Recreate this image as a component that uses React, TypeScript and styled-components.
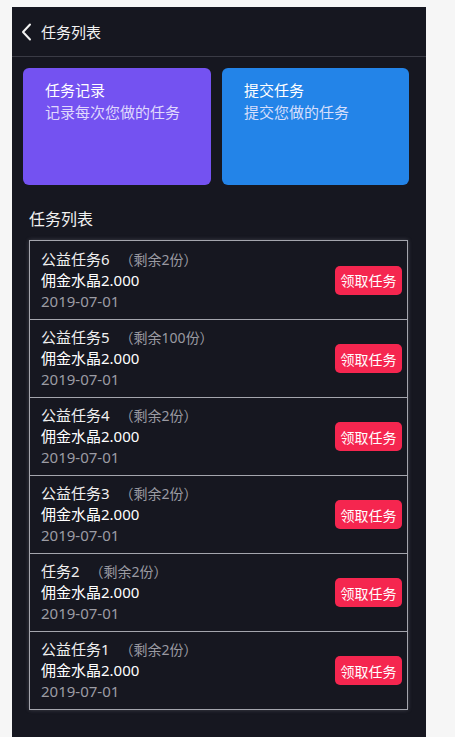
import React from "react";
import styled, { createGlobalStyle } from "styled-components";

const Global = createGlobalStyle`
  html, body { margin: 0; padding: 0; background: #f6f6f6; }
  body {
    font-family: "Noto Sans", "Noto Sans CJK SC", sans-serif;
    -webkit-font-smoothing: antialiased;
  }
  #root { padding: 7px 0 0 12px; }
`;

const Panel = styled.div`
  width: 414px;
  min-height: 760px;
  background: #161720;
  color: #fff;
`;

const Header = styled.div`
  height: 50px;
  border-bottom: 1px solid #3a3b45;
  display: flex;
  align-items: center;
  padding-left: 9px;
  gap: 8px;
  box-sizing: border-box;
`;

const HeaderTitle = styled.div`
  font-size: 15px;
  color: #f2f2f2;
`;

const Cards = styled.div`
  display: grid;
  grid-template-columns: 188px 187px;
  gap: 11px;
  padding: 11px 0 0 11px;
`;

const Card = styled.div<{ $bg: string }>`
  height: 117px;
  border-radius: 6px;
  background: ${(p) => p.$bg};
  padding: 11px 0 0 22px;
  box-sizing: border-box;
  line-height: 22px;
  font-size: 15px;
`;

const CardTitle = styled.div`
  color: #fff;
`;

const CardSub = styled.div`
  color: rgba(240, 236, 255, 0.88);
`;

const Section = styled.div`
  padding: 23px 18px 30px 17px;
`;

const SectionTitle = styled.div`
  font-size: 16px;
  line-height: 22px;
  color: #f2f2f2;
  margin-bottom: 10px;
`;

const List = styled.div`
  border: 1px solid #a4a5ad;
  box-shadow: 0 0 4px rgba(200, 200, 210, 0.25);
`;

const Row = styled.div`
  display: flex;
  align-items: center;
  justify-content: space-between;
  padding: 7px 5px 7px 11px;
  border-top: 1px solid #a4a5ad;
  &:first-child { border-top: none; }
  height: 78px;
  box-sizing: border-box;
`;

const Info = styled.div`
  font-size: 15px;
  line-height: 21px;
`;

const Name = styled.div`
  color: #f0f0f0;
  display: flex;
`;

const Remain = styled.span`
  color: #9a9aa2;
  font-size: 14px;
  margin-left: 10px;
`;

const Commission = styled.div`
  color: #fff;
`;

const DateText = styled.div`
  color: #9c9ca4;
`;

const Btn = styled.button`
  border: none;
  background: #f5264f;
  color: #fff;
  font-family: inherit;
  font-size: 14px;
  height: 29px;
  width: 67px;
  padding: 0;
  border-radius: 5px;
  cursor: pointer;
`;

const Back = () => (
  <svg width="12" height="18" viewBox="0 0 12 18">
    <polyline points="9,1.5 2,9 9,16.5" fill="none" stroke="#f2f2f2" strokeWidth="2" strokeLinecap="round" strokeLinejoin="round" />
  </svg>
);

const tasks = [
  { name: "公益任务6", remain: "2" },
  { name: "公益任务5", remain: "100" },
  { name: "公益任务4", remain: "2" },
  { name: "公益任务3", remain: "2" },
  { name: "任务2", remain: "2" },
  { name: "公益任务1", remain: "2" },
];

export default function App() {
  return (
    <>
      <Global />
      <Panel>
        <Header>
          <Back />
          <HeaderTitle>任务列表</HeaderTitle>
        </Header>
        <Cards>
          <Card $bg="#7452f1">
            <CardTitle>任务记录</CardTitle>
            <CardSub>记录每次您做的任务</CardSub>
          </Card>
          <Card $bg="#2384e8">
            <CardTitle>提交任务</CardTitle>
            <CardSub>提交您做的任务</CardSub>
          </Card>
        </Cards>
        <Section>
          <SectionTitle>任务列表</SectionTitle>
          <List>
            {tasks.map((t) => (
              <Row key={t.name}>
                <Info>
                  <Name>
                    {t.name}
                    <Remain>（剩余{t.remain}份）</Remain>
                  </Name>
                  <Commission>佣金水晶2.000</Commission>
                  <DateText>2019-07-01</DateText>
                </Info>
                <Btn>领取任务</Btn>
              </Row>
            ))}
          </List>
        </Section>
      </Panel>
    </>
  );
}
